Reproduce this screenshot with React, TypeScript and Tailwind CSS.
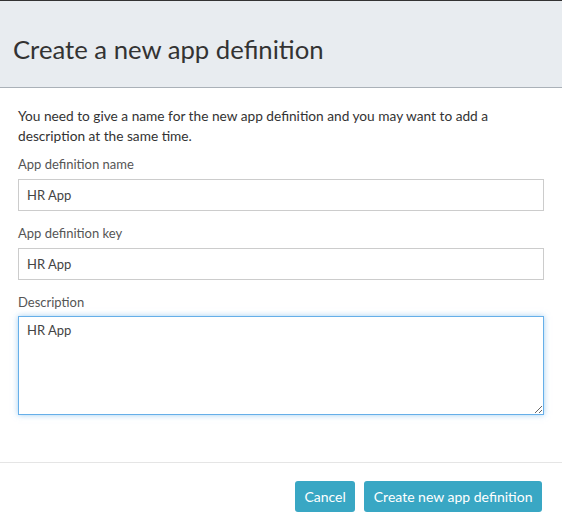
import React, { useState } from "react";

const App = () => {
  const [name, setName] = useState("HR App");
  const [key, setKey] = useState("HR App");
  const [desc, setDesc] = useState("HR App");

  const fields = [
    { label: "App definition name", value: name, set: setName },
    { label: "App definition key", value: key, set: setKey },
  ];

  return (
    <div className="w-[562px] h-[532px] bg-white border-t border-[#333] font-[Lato,sans-serif] text-[#333]">
      {/* header */}
      <div className="h-[87px] bg-[#e8ecf0] border-b border-[#aab1b8] pt-[35px] pl-[13px]">
        <h1 className="text-[25.7px] leading-[27px] font-normal text-[#333]">Create a new app definition</h1>
      </div>

      {/* body */}
      <div className="px-[18px] pt-[18px] pb-[47px] border-b border-[#e5e5e5]">
        <p className="text-[13.7px] leading-[20px] mb-[8px]">
          You need to give a name for the new app definition and you may want to add a description at the same time.
        </p>

        {fields.map((f, i) => (
          <div key={i} className="mb-[12px]">
            <label className="block text-[13px] leading-[20px] mb-[5px] text-[#555]">{f.label}</label>
            <input
              type="text"
              value={f.value}
              onChange={(e) => f.set(e.target.value)}
              className="block w-full h-[32px] px-[8px] border border-[#ccc] text-[13px] text-[#444] outline-none"
            />
          </div>
        ))}

        <div>
          <label className="block text-[13px] leading-[20px] mb-[4px] text-[#555]">Description</label>
          <textarea
            value={desc}
            onChange={(e) => setDesc(e.target.value)}
            className="block w-full h-[99px] px-[8px] py-[3px] border border-[#66afe9] shadow-[0_0_6px_rgba(102,175,233,0.6)] text-[13px] leading-[20px] text-[#444] outline-none resize"
          />
        </div>
      </div>

      {/* footer */}
      <div className="flex justify-end gap-[9px] pt-[18px] pr-[20px]">
        <button className="h-[31px] px-[9.5px] rounded-[3px] bg-[#39a7c4] text-white text-[14px]">Cancel</button>
        <button className="h-[31px] px-[9.5px] rounded-[3px] bg-[#39a7c4] text-white text-[14px]">
          Create new app definition
        </button>
      </div>
    </div>
  );
};

export default App;
